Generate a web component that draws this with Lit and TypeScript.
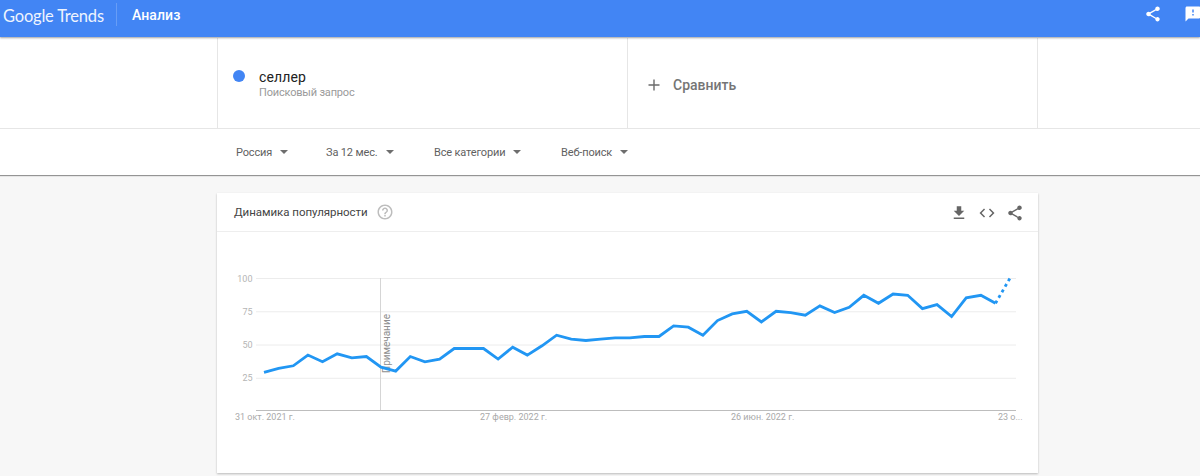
import { LitElement, html, svg, css } from "lit";
import { customElement } from "lit/decorators.js";

const VALUES = [
  29, 32, 34, 42, 37, 43, 40, 41, 33, 30, 41, 37, 39, 47, 47, 47, 39, 48, 42, 49, 57, 54, 53, 54, 55, 55,
  56, 56, 64, 63, 57, 68, 73, 75, 67, 75, 74, 72, 79, 74, 78, 87, 81, 88, 87, 77, 80, 71, 85, 87, 81, 100,
];
const FILTERS = ["Россия", "За 12 мес.", "Все категории", "Веб-поиск"];

// chart coordinates are relative to the card body (card left 217, body top 232)
const px = (i: number) => 47 + i * 14.63;
const py = (v: number) => 179 - v * 1.33;
const pts = (from: number, to: number) =>
  VALUES.slice(from, to)
    .map((v, i) => `${px(i + from).toFixed(1)},${py(v).toFixed(1)}`)
    .join(" ");

const shareIcon = svg`<path d="M18 16.08c-.76 0-1.44.3-1.96.77L8.91 12.7c.05-.23.09-.46.09-.7s-.04-.47-.09-.7l7.05-4.11c.54.5 1.25.81 2.04.81 1.66 0 3-1.34 3-3s-1.34-3-3-3-3 1.34-3 3c0 .24.04.47.09.7L8.04 9.81C7.5 9.31 6.79 9 6 9c-1.66 0-3 1.34-3 3s1.34 3 3 3c.79 0 1.5-.31 2.04-.81l7.12 4.16c-.05.21-.08.43-.08.65 0 1.61 1.31 2.92 2.92 2.92 1.61 0 2.92-1.31 2.92-2.92s-1.31-2.92-2.92-2.92z"/>`;

@customElement("app-root")
export class AppRoot extends LitElement {
  static styles = css`
    :host {
      display: block;
      height: 476px;
      overflow: hidden;
      background: #f7f7f7;
      font-family: Roboto, "Liberation Sans", sans-serif;
    }
    header {
      position: relative;
      z-index: 2;
      height: 37px;
      display: flex;
      background: #4285f4;
      color: #fff;
      box-shadow: 0 1px 2px rgba(0, 0, 0, 0.35);
    }
    .logo {
      margin: 1px 0 0 3px;
      width: 100px;
      height: 30px;
      line-height: 30px;
      font-family: Lato, sans-serif;
      font-size: 16.5px;
      letter-spacing: -0.2px;
      white-space: nowrap;
      color: #eef4fe;
    }
    .logo-sep {
      width: 1px;
      height: 23px;
      margin: 3px 0 0 13px;
      background: rgba(255, 255, 255, 0.2);
    }
    .page-title {
      margin: 0 0 0 15px;
      font-size: 14px;
      font-weight: 500;
      line-height: 30px;
      letter-spacing: 0.1px;
    }
    .head-icons {
      margin-left: auto;
      display: flex;
      align-items: flex-start;
      gap: 22px;
      width: 56px;
      overflow: hidden;
    }
    .head-icons svg {
      flex: none;
      margin-top: 5px;
      width: 18px;
      height: 18px;
      fill: #fff;
    }
    .search-row {
      height: 90px;
      margin-top: 1px;
      display: grid;
      grid-template-columns: 410px 410px 1fr;
      padding-left: 217px;
      background: #fff;
      border-bottom: 1px solid #e6e6e6;
    }
    .cell {
      border-left: 1px solid #e6e6e6;
      display: flex;
      align-items: center;
    }
    .dot {
      width: 12px;
      height: 12px;
      border-radius: 50%;
      background: #4285f4;
      margin: 0 14px 0 15px;
      position: relative;
      top: -7px;
    }
    .term-block {
      padding-top: 2px;
    }
    .term {
      font-size: 14px;
      line-height: 16px;
      color: #222;
      letter-spacing: 0.15px;
    }
    .term-type {
      font-size: 11px;
      line-height: 15px;
      letter-spacing: -0.18px;
      color: #9a9a9a;
    }
    .plus {
      width: 12px;
      height: 12px;
      margin: 3px 13px 0 20px;
      stroke: #6b6b6b;
      fill: none;
    }
    .compare {
      margin-top: 3px;
      font-size: 14px;
      font-weight: 500;
      color: #757575;
    }
    .filters {
      position: relative;
      z-index: 1;
      height: 46px;
      display: flex;
      align-items: center;
      padding-left: 236px;
      background: #fff;
      box-shadow: 0 1px 1px rgba(0, 0, 0, 0.4);
    }
    .filter {
      display: flex;
      align-items: center;
      font-size: 11px;
      letter-spacing: -0.15px;
      color: #5f5f5f;
    }
    .filter::after {
      content: "";
      margin-left: 8px;
      border: 4px solid transparent;
      border-top: 4px solid #6e6e6e;
      border-bottom: 0;
    }
    .filter:nth-child(1) { width: 90px; }
    .filter:nth-child(2) { width: 108px; }
    .filter:nth-child(3) { width: 127px; }
    .card {
      margin: 18px 0 0 217px;
      width: 821px;
      height: 280px;
      box-sizing: border-box;
      background: #fff;
      box-shadow: 0 1px 2px rgba(0, 0, 0, 0.25);
    }
    .card-head {
      height: 39px;
      box-sizing: border-box;
      display: flex;
      align-items: center;
      padding: 0 14px 0 17px;
      border-bottom: 1px solid #eeeeee;
    }
    .card-title {
      font-size: 11.5px;
      letter-spacing: -0.04px;
      color: #444;
    }
    .help {
      width: 18px;
      height: 18px;
      margin-left: 8px;
      fill: #bdbdbd;
    }
    .card-actions {
      margin-left: auto;
      display: flex;
      align-items: center;
      gap: 10px;
      padding-top: 2px;
    }
    .card-actions svg {
      width: 18px;
      height: 18px;
      fill: #666;
    }
    .chart {
      display: block;
      width: 820px;
      height: 240px;
    }
    .grid { stroke: #ececec; stroke-width: 1; }
    .axis { stroke: #bdbdbd; stroke-width: 1; }
    .note { stroke: #d5d5d5; stroke-width: 1; }
    .ylab, .xlab {
      font-family: Roboto, sans-serif;
      font-size: 9px;
      fill: #b5b5b5;
    }
    .xlab { fill: #a9a9a9; }
    .notetext {
      font-family: Roboto, sans-serif;
      font-size: 10px;
      fill: #8f8f8f;
    }
    .line {
      fill: none;
      stroke: #2196f3;
      stroke-width: 2.8;
      stroke-linejoin: miter;
    }
    .dotted { stroke-dasharray: 3 3.4; }
  `;

  render() {
    return html`
      <header>
        <div class="logo">Google Trends</div>
        <div class="logo-sep"></div>
        <h1 class="page-title">Анализ</h1>
        <div class="head-icons">
          <svg viewBox="0 0 24 24">${shareIcon}</svg>
          <svg viewBox="0 0 24 24">
            <path d="M20 2H4c-1.1 0-2 .9-2 2v18l4-4h14c1.1 0 2-.9 2-2V4c0-1.1-.9-2-2-2zm-7 12h-2v-2h2v2zm0-4h-2V6h2v4z" />
          </svg>
        </div>
      </header>

      <section class="search-row">
        <div class="cell">
          <span class="dot"></span>
          <div class="term-block">
            <div class="term">селлер</div>
            <div class="term-type">Поисковый запрос</div>
          </div>
        </div>
        <div class="cell">
          <svg class="plus" viewBox="0 0 12 12"><path d="M6 .5v11M.5 6h11" stroke-width="1.4" /></svg>
          <span class="compare">Сравнить</span>
        </div>
        <div class="cell"></div>
      </section>

      <nav class="filters">
        ${FILTERS.map((f) => html`<div class="filter">${f}</div>`)}
      </nav>

      <section class="card">
        <div class="card-head">
          <span class="card-title">Динамика популярности</span>
          <svg class="help" viewBox="0 0 24 24">
            <path d="M11 18h2v-2h-2v2zm1-16C6.48 2 2 6.48 2 12s4.48 10 10 10 10-4.48 10-10S17.52 2 12 2zm0 18c-4.41 0-8-3.59-8-8s3.59-8 8-8 8 3.59 8 8-3.59 8-8 8zm0-14c-2.21 0-4 1.79-4 4h2c0-1.1.9-2 2-2s2 .9 2 2c0 2-3 1.75-3 5h2c0-2.25 3-2.5 3-5 0-2.21-1.79-4-4-4z" />
          </svg>
          <div class="card-actions">
            <svg viewBox="0 0 24 24"><path d="M19 9h-4V3H9v6H5l7 7 7-7zM5 18v2h14v-2H5z" /></svg>
            <svg viewBox="0 0 24 24"><path d="M9.4 16.6 4.8 12l4.6-4.6L8 6l-6 6 6 6 1.4-1.4zm5.2 0 4.6-4.6-4.6-4.6L16 6l6 6-6 6-1.4-1.4z" /></svg>
            <svg viewBox="0 0 24 24">${shareIcon}</svg>
          </div>
        </div>
        <svg class="chart" viewBox="0 0 820 240">
          ${[100, 75, 50, 25].map(
            (v) => svg`
              <line class="grid" x1="39" x2="799" y1=${py(v) + 0.5} y2=${py(v) + 0.5}></line>
              <text class="ylab" x="35.5" y=${py(v) + 3.5} text-anchor="end">${v}</text>
            `
          )}
          <line class="axis" x1="39" x2="799" y1="178.5" y2="178.5"></line>
          <line class="note" x1="163.5" x2="163.5" y1="46" y2="178"></line>
          <text class="notetext" transform="translate(173 141) rotate(-90)" text-anchor="start">Примечание</text>
          <polyline class="line" points=${pts(0, 51)}></polyline>
          <polyline class="line dotted" points=${pts(50, 52)}></polyline>
          <text class="xlab" x="18" y="188">31 окт. 2021 г.</text>
          <text class="xlab" x="263" y="188">27 февр. 2022 г.</text>
          <text class="xlab" x="514" y="188">26 июн. 2022 г.</text>
          <text class="xlab" x="781" y="188">23 о...</text>
        </svg>
      </section>
    `;
  }
}
